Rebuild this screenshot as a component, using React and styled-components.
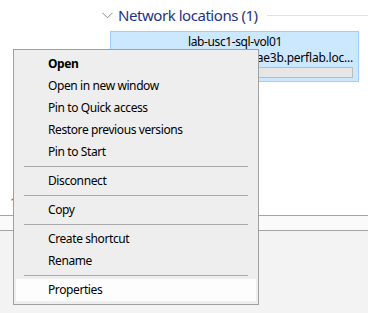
import styled, { createGlobalStyle } from 'styled-components';

const GlobalStyle = createGlobalStyle`
    html, body {
        margin: 0;
        padding: 0;
        background: #ffffff;
    }
    body {
        font-family: 'Noto Sans', 'Liberation Sans', sans-serif;
        font-size: 12px;
        letter-spacing: -0.4px;
        color: #000000;
    }
`;

const Window = styled.div`
    position: relative;
    width: 368px;
    height: 313px;
    overflow: hidden;
    display: flex;
    flex-direction: column;
    background: #ffffff;
`;

const Content = styled.div`
    height: 215px;
    display: flex;
    flex-direction: column;
    padding-left: 102px;
    box-sizing: border-box;
`;

const GroupHeader = styled.div`
    display: flex;
    align-items: center;
    height: 31px;
    padding-bottom: 1px;
    box-sizing: border-box;
`;

const Chevron = styled.svg`
    width: 11px;
    height: 7px;
    margin-right: 5px;
    margin-top: 1px;
`;

const GroupTitle = styled.span`
    font-size: 15px;
    letter-spacing: -0.45px;
    color: #1e3287;
    white-space: nowrap;
`;

const GroupRule = styled.div`
    flex: 1;
    height: 1px;
    margin-left: 9px;
    background: #e2e2e2;
`;

const Tile = styled.div`
    margin-left: 8px;
    width: 249px;
    height: 51px;
    box-sizing: border-box;
    border: 1px solid #99d1ff;
    background: #cce8ff;
    padding: 2px 5px 0 6px;
    display: flex;
    flex-direction: column;
`;

const TileName = styled.div`
    text-align: center;
    line-height: 16px;
    white-space: nowrap;
`;

const TilePath = styled.div`
    display: flex;
    justify-content: flex-end;
    overflow: hidden;
    white-space: nowrap;
    line-height: 16px;
    letter-spacing: -0.22px;
`;

const UsageBar = styled.div`
    margin-top: 1px;
    height: 11px;
    box-sizing: border-box;
    border: 1px solid #bcbcbc;
    background: #e6e6e6;
`;

const StatusLink = styled.div`
    margin-top: auto;
    margin-left: -92px;
    margin-bottom: 5px;
    color: #6b3fa0;
    line-height: 14px;
`;

const Divider = styled.div`
    height: 1px;
    background: ${(p) => p.$color};
`;

const Strip = styled.div`
    height: 14px;
    background: #fafafa;
`;

const Footer = styled.div`
    flex: 1;
    background: #f3f3f3;
`;

const Menu = styled.div`
    position: absolute;
    left: 13px;
    top: 49px;
    width: 246px;
    box-sizing: border-box;
    border: 1px solid #a0a0a0;
    background: #eeeeee;
    padding: 3px 2px;
    display: flex;
    flex-direction: column;
`;

const MenuItem = styled.div`
    height: 22px;
    line-height: 22px;
    padding-left: 32px;
    font-weight: ${(p) => (p.$bold ? 700 : 400)};
    background: ${(p) => (p.$hover ? '#fdfdfd' : 'transparent')};
    white-space: nowrap;
`;

const Separator = styled.div`
    height: 7px;
    display: flex;
    align-items: center;
    padding: 0 8px;

    &::after {
        content: '';
        flex: 1;
        height: 1px;
        background: #a8a8a8;
    }
`;

const menu = [
    { label: 'Open', bold: true },
    { label: 'Open in new window' },
    { label: 'Pin to Quick access' },
    { label: 'Restore previous versions' },
    { label: 'Pin to Start' },
    'sep',
    { label: 'Disconnect' },
    'sep',
    { label: 'Copy' },
    'sep',
    { label: 'Create shortcut' },
    { label: 'Rename' },
    'sep',
    { label: 'Properties', hover: true },
];

export default function App() {
    return (
        <>
            <GlobalStyle />
            <Window>
                <Content>
                    <GroupHeader>
                        <Chevron viewBox="0 0 11 7">
                            <path d="M0.5 0.8 L5.5 5.8 L10.5 0.8" fill="none" stroke="#8a8a8a" strokeWidth="1" />
                        </Chevron>
                        <GroupTitle>Network locations (1)</GroupTitle>
                        <GroupRule />
                    </GroupHeader>
                    <Tile>
                        <TileName>lab-usc1-sql-vol01</TileName>
                        <TilePath>
                            <span>(\\lab-usc1-sql-vol01.fs-ae3b.perflab.loc...</span>
                        </TilePath>
                        <UsageBar />
                    </Tile>
                    <StatusLink>1</StatusLink>
                </Content>
                <Divider $color="#a5a5a5" />
                <Strip />
                <Divider $color="#a5a5a5" />
                <Footer />

                <Menu>
                    {menu.map((item, i) =>
                        item === 'sep' ? (
                            <Separator key={i} />
                        ) : (
                            <MenuItem key={i} $bold={item.bold} $hover={item.hover}>
                                {item.label}
                            </MenuItem>
                        )
                    )}
                </Menu>
            </Window>
        </>
    );
}
